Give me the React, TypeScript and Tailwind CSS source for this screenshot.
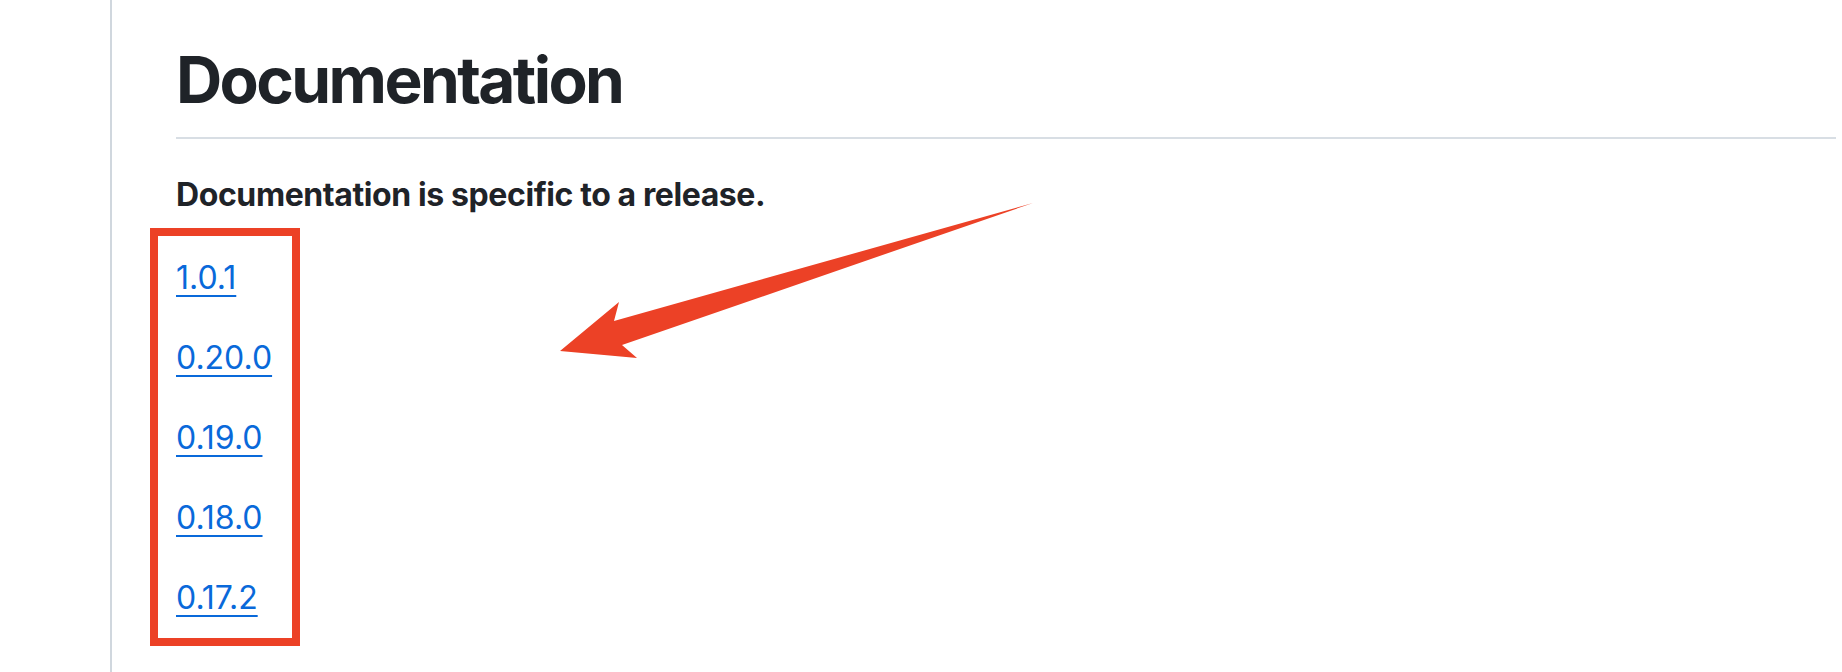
const releases = ["1.0.1", "0.20.0", "0.19.0", "0.18.0", "0.17.2"];

export default function App() {
  return (
    <div className="relative flex h-[672px] w-full overflow-hidden bg-white font-['Inter','Liberation_Sans',sans-serif] text-[#1f2328]">
      {/* left gutter */}
      <div className="w-[110px] shrink-0" />

      <main className="flex-1 border-l-2 border-[#d0d7de] pl-[64px] pr-[6px]">
        <h1 className="border-b-2 border-[#d8dee4] pt-[40px] pb-[17px] text-[64px] leading-[80px] font-bold tracking-[-2.6px]">
          Documentation
        </h1>

        <p className="mt-8 mb-8 text-[32px] leading-[48px] font-bold tracking-[-0.4px]">
          Documentation is specific to a release.
        </p>

        <div className="pt-[3px]">
          {releases.map((r) => (
            <p key={r} className="mb-8 text-[32px] leading-[48px]">
              <a
                href="#"
                className="text-[#0969da] underline decoration-2 underline-offset-[6px]"
              >
                {r}
              </a>
            </p>
          ))}
        </div>
      </main>

      {/* annotation: box around the release links */}
      <div className="absolute left-[150px] top-[228px] h-[418px] w-[150px] border-[8px] border-[#ec4126]" />

      {/* annotation: arrow */}
      <svg
        className="pointer-events-none absolute left-0 top-0"
        width="1842"
        height="672"
        viewBox="0 0 1842 672"
      >
        <polygon
          points="560,351 619,302 614,321 1033,203 622,345 637,358"
          fill="#ec4126"
        />
      </svg>
    </div>
  );
}
